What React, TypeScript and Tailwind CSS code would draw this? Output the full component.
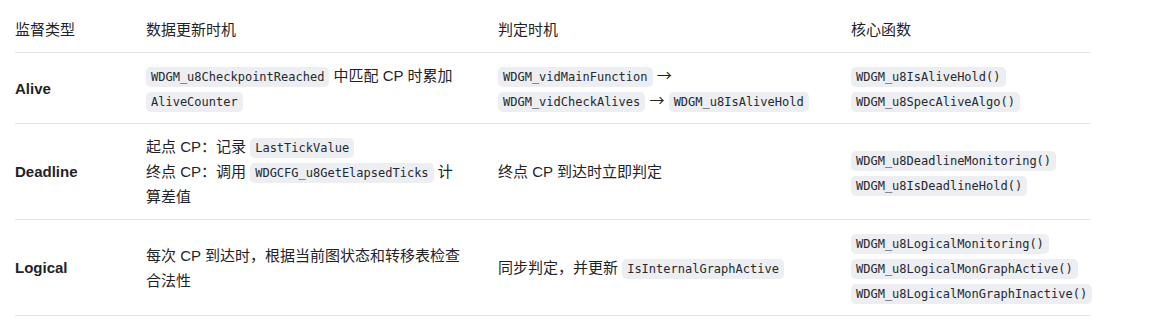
import React from 'react';

// Monitoring comparison table

const Code = ({ children }: { children: React.ReactNode }) => (
  <code className="rounded-[5px] bg-[#eceef2] px-[5px] py-[3px] font-['DejaVu_Sans_Mono','Liberation_Mono',monospace] text-[12px] leading-[12px] text-[#24292f]">
    {children}
  </code>
);

const Arrow = () => <span className="font-['Noto_Sans_CJK_SC',sans-serif] leading-[12px]">→</span>;

const cell = 'flex items-center pr-[34px] py-[10px]';

const rows = [
  {
    type: 'Alive',
    update: (
      <>
        <Code>WDGM_u8CheckpointReached</Code> 中匹配 CP 时累加 <Code>AliveCounter</Code>
      </>
    ),
    judge: (
      <>
        <Code>WDGM_vidMainFunction</Code> <Arrow /> <Code>WDGM_vidCheckAlives</Code> <Arrow />{' '}
        <Code>WDGM_u8IsAliveHold</Code>
      </>
    ),
    funcs: ['WDGM_u8IsAliveHold()', 'WDGM_u8SpecAliveAlgo()'],
  },
  {
    type: 'Deadline',
    update: (
      <>
        起点 CP：记录 <Code>LastTickValue</Code>
        <br />
        终点 CP：调用 <Code>WDGCFG_u8GetElapsedTicks</Code> 计算差值
      </>
    ),
    judge: <>终点 CP 到达时立即判定</>,
    funcs: ['WDGM_u8DeadlineMonitoring()', 'WDGM_u8IsDeadlineHold()'],
  },
  {
    type: 'Logical',
    update: <>每次 CP 到达时，根据当前图状态和转移表检查合法性</>,
    judge: (
      <>
        同步判定，并更新 <Code>IsInternalGraphActive</Code>
      </>
    ),
    funcs: ['WDGM_u8LogicalMonitoring()', 'WDGM_u8LogicalMonGraphActive()', 'WDGM_u8LogicalMonGraphInactive()'],
  },
];

export default function App() {
  return (
    <div className="min-h-[335px] bg-white pl-[15px] font-['Liberation_Sans','Noto_Sans_CJK_SC',sans-serif] text-[15px] leading-[25px] text-[#1f2328]">
      <div className="grid w-[1075px] grid-cols-[131px_352px_353px_239px]">
        {/* header */}
        <div className="col-span-4 grid grid-cols-subgrid border-b border-[#e3e3e3] pt-[17px] pb-[10px]">
          <div>监督类型</div>
          <div>数据更新时机</div>
          <div>判定时机</div>
          <div>核心函数</div>
        </div>

        {rows.map((r) => (
          <div key={r.type} className="col-span-4 grid grid-cols-subgrid border-b border-[#e3e3e3]">
            <div className={`${cell} font-bold`}>{r.type}</div>
            <div className={cell}>
              <div>{r.update}</div>
            </div>
            <div className={cell}>
              <div>{r.judge}</div>
            </div>
            <div className="flex items-center py-[10px]">
              <div className="whitespace-nowrap">
                {r.funcs.map((f) => (
                  <div key={f}>
                    <Code>{f}</Code>
                  </div>
                ))}
              </div>
            </div>
          </div>
        ))}
      </div>
    </div>
  );
}
